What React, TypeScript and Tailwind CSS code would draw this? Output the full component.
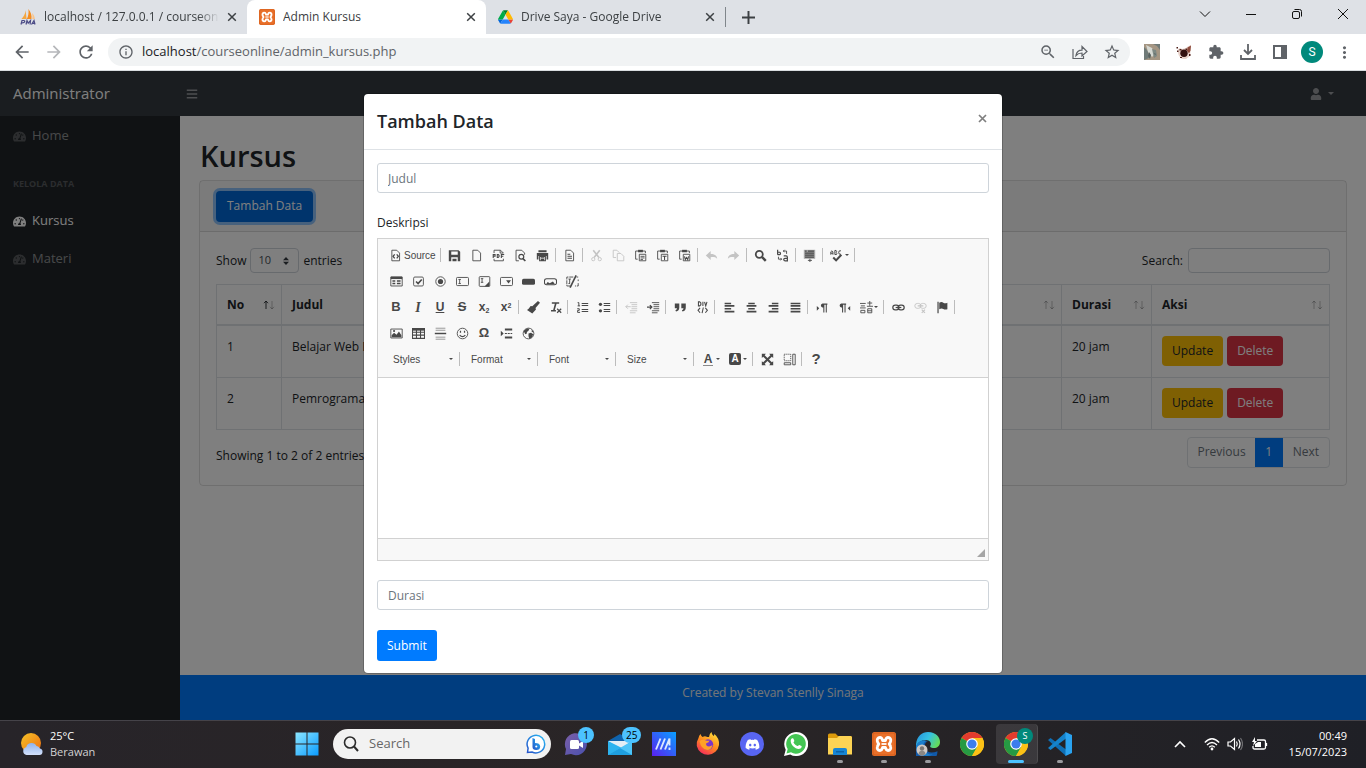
import React from "react";
import { FaBars, FaDiscord, FaTachometerAlt, FaUser } from "react-icons/fa";
import {
  MdArrowBack,
  MdArrowForward,
  MdInfoOutline,
  MdMoreVert,
  MdRefresh,
  MdStarBorder,
  MdZoomOut,
} from "react-icons/md";

/* ---------- Browser chrome ---------- */

function PmaLogo() {
  return (
    <svg viewBox="0 0 16 16" className="size-4 shrink-0" aria-hidden="true">
      <path d="M5.6 1.2 6.600 10H1.4C3.6 8 5.2 5 5.6 1.2Z" fill="#f4a640" />
      <path d="M8.4 0C11 3 12 7 11.4 10H6.8C8.4 7 8.9 3.600 8.400 0Z" fill="#f58c1e" />
      <path d="M12 4c1.800 1.600 2.800 4 2.900 6h-2.600c.4-2 .3-4-.3-6Z" fill="#f9c48a" />
      <path d="M1 15.500 2 11.500h1.800q1.200.2.9 1.300-.4 1.100-2.600 1M6 15.500l1-4 1.200 2.700 2.300-2.700-.4 4M11.500 15.500l2.500-4 1 4M12.400 14.300h2.300" fill="none" stroke="#4b4b86" strokeWidth="1.200" />
    </svg>
  );
}

function XamppLogo({ className }: { className: string }) {
  return (
    <svg viewBox="0 0 24 24" className={className} aria-hidden="true">
      <rect width="24" height="24" rx="2.500" fill="#e9702a" />
      <rect x="1" y="1" width="22" height="22" rx="2" fill="none" stroke="#d65f1c" strokeWidth="1" />
      <path
        d="M8 5.500C5.500 5.500 5 7.500 5.300 9c.2 1.200.8 2.200 1.500 3-.7.8-1.300 1.800-1.500 3-.3 1.500.2 3.500 2.700 3.500 2 0 2.200-1.700 2.600-3h2.800c.4 1.300.6 3 2.600 3 2.500 0 3-2 2.700-3.500-.2-1.200-.8-2.200-1.500-3 .7-.8 1.300-1.800 1.500-3 .3-1.500-.2-3.500-2.700-3.500-2 0-2.200 1.700-2.600 3h-2.800C10.200 7.200 10 5.500 8 5.500Z"
        fill="none"
        stroke="#fff"
        strokeWidth="2.800"
        strokeLinejoin="round"
      />
      <path d="M9.500 12h5" stroke="#fff" strokeWidth="1.800" />
    </svg>
  );
}

function DriveLogo() {
  return (
    <svg viewBox="0 0 87.300 78" className="h-[14px] w-[15px] shrink-0" aria-hidden="true">
      <path d="m6.600 66.850 3.850 6.650c.8 1.400 1.950 2.500 3.300 3.300l13.750-23.800h-27.500c0 1.550.4 3.100 1.200 4.500z" fill="#0066da" />
      <path d="m43.650 25-13.750-23.800c-1.350.8-2.500 1.900-3.300 3.300l-25.400 44a9.060 9.060 0 0 0-1.200 4.500h27.500z" fill="#00ac47" />
      <path d="m73.550 76.800c1.350-.8 2.500-1.900 3.300-3.300l1.600-2.750 7.650-13.250c.8-1.400 1.200-2.950 1.200-4.500h-27.502l5.852 11.500z" fill="#ea4335" />
      <path d="m43.650 25 13.750-23.800c-1.350-.8-2.900-1.200-4.500-1.200h-18.500c-1.600 0-3.150.45-4.500 1.200z" fill="#00832d" />
      <path d="m59.800 53h-32.300l-13.750 23.800c1.350.8 2.900 1.200 4.500 1.200h50.800c1.600 0 3.150-.45 4.500-1.200z" fill="#2684fc" />
      <path d="m73.400 26.500-12.700-22c-.8-1.400-1.950-2.500-3.300-3.300l-13.750 23.800 16.150 28h27.450c0-1.550-.4-3.100-1.200-4.500z" fill="#ffba00" />
    </svg>
  );
}

function Tab({ icon, title, active = false }: { icon: React.ReactNode; title: string; active?: boolean }) {
  return (
    <div className={`flex h-full w-[239px] items-center pr-[10px] pl-3 ${active ? "rounded-t-lg bg-white" : ""}`}>
      {icon}
      <span
        className={`ml-2 flex-1 overflow-hidden text-[12px] whitespace-nowrap text-[#3c4043] ${
          active ? "" : "[mask-image:linear-gradient(to_right,black_88%,transparent)]"
        }`}
      >
        {title}
      </span>
      <button type="button" aria-label={`Close ${title}`} className="ml-2 flex size-[10px] shrink-0 items-center">
        <svg viewBox="0 0 10 10" className="size-[10px]">
          <path d="M1.200 1.200l7.600 7.600M8.800 1.200L1.200 8.800" stroke="#3c4043" strokeWidth="1.500" />
        </svg>
      </button>
    </div>
  );
}

function WindowButton({ label, children }: { label: string; children: React.ReactNode }) {
  return (
    <button type="button" aria-label={label} className="flex h-7 w-[46px] items-center justify-center">
      <svg viewBox="0 0 12 12" className="size-3" fill="none" stroke="#111" strokeWidth="1">
        {children}
      </svg>
    </button>
  );
}

function ToolButton({ label, children }: { label: string; children: React.ReactNode }) {
  return (
    <button type="button" aria-label={label} className="flex h-7 w-8 shrink-0 items-center justify-center text-[#5f6368]">
      {children}
    </button>
  );
}

function BrowserChrome() {
  return (
    <header className="shrink-0 border-b border-[#d8dcdf] bg-white">
      <div className="flex h-[34px] items-center bg-[#dee1e6] pl-2">
        <Tab icon={<PmaLogo />} title="localhost / 127.0.0.1 / courseonlin" />
        <Tab icon={<XamppLogo className="size-4 shrink-0" />} title="Admin Kursus" active />
        <Tab icon={<DriveLogo />} title="Drive Saya - Google Drive" />
        <div className="h-5 w-px bg-[#80868b]" />
        <button type="button" aria-label="New tab" className="ml-4">
          <svg viewBox="0 0 12 12" className="size-[13px]">
            <path d="M6 0v12M0 6h12" stroke="#3c4043" strokeWidth="1.800" />
          </svg>
        </button>
        <div className="ml-auto flex h-full items-start">
          <WindowButton label="Search tabs">
            <path d="M1 3.500l5 5 5-5" />
          </WindowButton>
          <WindowButton label="Minimize">
            <path d="M1 6.500h10" />
          </WindowButton>
          <WindowButton label="Restore">
            <rect x="1.500" y="3.500" width="7" height="7" rx="1.500" />
            <path d="M3.500 1.500h5q2 0 2 2v5" />
          </WindowButton>
          <WindowButton label="Close">
            <path d="M1 1l10 10M11 1L1 11" />
          </WindowButton>
        </div>
      </div>
      <div className="flex h-9 items-center pr-[6px] pl-[6px]">
        <ToolButton label="Back"><MdArrowBack size={20} /></ToolButton>
        <ToolButton label="Forward"><MdArrowForward size={20} className="text-[#b5b7ba]" /></ToolButton>
        <ToolButton label="Reload"><MdRefresh size={20} /></ToolButton>
        <div className="mx-[6px] flex h-7 flex-1 items-center rounded-full bg-[#f1f3f4] pr-[2px] pl-[10px]">
          <MdInfoOutline size={16} className="shrink-0 text-[#5f6368]" />
          <span className="ml-2 text-[13px] text-[#5f6368]">
            <span className="text-[#202124]">localhost</span>/courseonline/admin_kursus.php
          </span>
          <div className="ml-auto flex">
            <ToolButton label="Zoom"><MdZoomOut size={18} /></ToolButton>
            <ToolButton label="Share">
              <svg viewBox="0 0 16 16" className="size-4" fill="none" stroke="currentColor" strokeWidth="1.200">
                <path d="M1 5v9.500h10.500V12M4 11.500c.5-3.500 2.500-5.300 6-5.300V2.500l5 5-5 4.500V9C7.500 9 5.500 9.800 4 11.500Z" />
              </svg>
            </ToolButton>
            <ToolButton label="Bookmark"><MdStarBorder size={18} /></ToolButton>
          </div>
        </div>
        <ToolButton label="Photo extension">
          <svg viewBox="0 0 16 16" className="size-4">
            <rect width="16" height="16" fill="#a59683" />
            <path d="M0 3l4 4 1 7-5 2ZM9 0h7v6l-3-4Z" fill="#6f7a78" />
            <path d="M2 1l6 3 3 6-3 3-4-5Z" fill="#d5d8d2" />
            <path d="M8 5l4 1 1 6-3 2Z" fill="#7d8883" />
            <path d="M5 8l2 3-1 4-2-3ZM10 9l2 1-1 1Z" fill="#566160" />
          </svg>
        </ToolButton>
        <ToolButton label="Cat extension">
          <svg viewBox="0 0 16 16" className="size-4">
            <path d="M2 5l2-1 2 1 4-1 1-1 4-2-.5 6-.5 5-4 3H6l-3-3-1-3Z" fill="#e9d3cb" />
            <path d="M11.500 3.500l3.500-2-.5 5-1.500 3-2-3Z" fill="#8d4a3c" />
            <circle cx="8" cy="9.300" r="3.700" fill="#33100f" />
            <path d="M.5 3h1.500v1.500H.500ZM1 6.500h1.500V8H1ZM3.500 5h2v1.500h-2ZM9.500 4.500H11V6H9.500ZM13 10h1.500v2H13ZM4 13h2v1H4Z" fill="#4a1c17" />
          </svg>
        </ToolButton>
        <ToolButton label="Extensions">
          <svg viewBox="0 0 24 24" className="size-4" fill="currentColor">
            <path d="M20.500 11H19V7c0-1.100-.9-2-2-2h-4V3.500C13 2.120 11.880 1 10.500 1S8 2.120 8 3.500V5H4c-1.100 0-1.990.9-1.990 2v3.800H3.500c1.490 0 2.700 1.210 2.700 2.700s-1.210 2.700-2.700 2.700H2V20c0 1.100.9 2 2 2h3.800v-1.500c0-1.490 1.210-2.700 2.700-2.700s2.700 1.210 2.700 2.700V22H17c1.100 0 2-.9 2-2v-4h1.500c1.380 0 2.500-1.120 2.500-2.500S21.880 11 20.500 11z" />
          </svg>
        </ToolButton>
        <ToolButton label="Downloads">
          <svg viewBox="0 0 16 16" className="size-4" fill="none" stroke="currentColor" strokeWidth="1.800">
            <path d="M8 0v9.500M4 6l4 4 4-4M1 11v4h14v-4" />
          </svg>
        </ToolButton>
        <ToolButton label="Side panel">
          <svg viewBox="0 0 14 14" className="size-[14px]">
            <path d="M0 0h14v14H0ZM2 2v10h6V2Z" fill="currentColor" fillRule="evenodd" />
          </svg>
        </ToolButton>
        <ToolButton label="Profile">
          <span className="flex size-[22px] items-center justify-center rounded-full bg-[#00897b] font-[Roboto] text-[12px] text-white">S</span>
        </ToolButton>
        <ToolButton label="Menu"><MdMoreVert size={19} /></ToolButton>
      </div>
    </header>
  );
}

/* ---------- Admin page ---------- */

function SideLink({ label, active = false }: { label: string; active?: boolean }) {
  return (
    <a href="#" className={`flex h-[38px] items-center px-[13px] text-[13px] ${active ? "text-white" : "text-white/50"}`}>
      <FaTachometerAlt size={13} className={`mr-[6px] ${active ? "text-white" : "text-white/25"}`} />
      {label}
    </a>
  );
}

function SortArrows({ ascending = false }: { ascending?: boolean }) {
  return (
    <svg viewBox="0 0 12 10" className="h-[10px] w-3 shrink-0" fill="none" stroke="#212529" aria-hidden="true">
      <path d="M3 9V1M1 3.200l2-2.200 2 2.200" opacity={ascending ? 0.9 : 0.3} />
      <path d="M9 1v8M7 6.800L9 9l2-2.200" opacity=".3" />
    </svg>
  );
}

function HeadCell({ label, ascending }: { label: string; ascending?: boolean }) {
  return (
    <th className="border border-b-2 border-[#dee2e6] py-0 pr-[6px] pl-[10px] text-left font-bold">
      <div className="flex h-[39px] items-center justify-between">
        {label}
        <SortArrows ascending={ascending} />
      </div>
    </th>
  );
}

const courses = [
  { no: 1, title: "Belajar Web Dasar", duration: "20 jam" },
  { no: 2, title: "Pemrograman", duration: "20 jam" },
];

function AdminPage() {
  return (
    <div className="flex h-full flex-col text-[12px] text-[#212529]">
      <nav className="flex h-[45px] shrink-0 items-center bg-[#343a40]">
        <a href="#" className="w-[180px] pl-[13px] text-[15px] text-white">Administrator</a>
        <button type="button" aria-label="Toggle sidebar" className="ml-[6px] text-white/50"><FaBars size={12} /></button>
        <button type="button" aria-label="Account" className="mr-8 ml-auto flex items-center gap-[6px] text-white/50">
          <FaUser size={12} />
          <svg viewBox="0 0 6 3" className="h-[3px] w-[6px]"><path d="M0 0h6L3 3Z" fill="currentColor" /></svg>
        </button>
      </nav>
      <div className="flex min-h-0 flex-1">
        <aside className="w-[180px] shrink-0 bg-[#212529] pt-px">
          <SideLink label="Home" />
          <h2 className="mt-[19px] mb-2 flex h-5 items-center px-[13px] text-[9px] leading-5 font-bold text-white/25">KELOLA DATA</h2>
          <SideLink label="Kursus" active />
          <SideLink label="Materi" />
        </aside>
        <div className="flex min-w-0 flex-1 flex-col bg-white">
          <main className="flex-1 px-5 pt-[22px]">
            <h1 className="h-[42px] text-[29px] leading-9 font-semibold">Kursus</h1>
            <section className="-mx-px rounded border border-black/[.125]">
              <div className="flex h-[51px] items-center border-b border-black/[.125] bg-black/[.03] px-4">
                <button type="button" className="h-[31px] rounded bg-[#0069d9] px-[11px] text-white ring-[3px] ring-[#268fff]/50">
                  Tambah Data
                </button>
              </div>
              <div className="px-4 pt-4 pb-[17px]">
                <div className="flex items-center justify-between">
                  <label className="flex items-center gap-1">
                    Show
                    <span className="relative flex items-center">
                      <select className="h-[25px] w-[49px] appearance-none rounded border border-[#ced4da] bg-white pl-[7px] text-[11px] text-[#495057]">
                        <option>10</option>
                      </select>
                      <svg viewBox="0 0 6 8" className="pointer-events-none absolute right-[10px] h-2 w-[6px]">
                        <path d="M0 3.200h6L3 0ZM0 4.800h6L3 8Z" fill="#343a40" />
                      </svg>
                    </span>
                    entries
                  </label>
                  <label className="flex items-center gap-[5px]">
                    Search:
                    <input type="search" className="h-[25px] w-[142px] rounded border border-[#ced4da] bg-white px-2" />
                  </label>
                </div>
                <table className="mt-[11px] w-full table-fixed border-collapse">
                  <colgroup>
                    <col className="w-[65px]" />
                    <col className="w-[220px]" />
                    <col />
                    <col className="w-[90px]" />
                    <col className="w-[178px]" />
                  </colgroup>
                  <thead>
                    <tr>
                      <HeadCell label="No" ascending />
                      <HeadCell label="Judul" />
                      <HeadCell label="Deskripsi" />
                      <HeadCell label="Durasi" />
                      <HeadCell label="Aksi" />
                    </tr>
                  </thead>
                  <tbody>
                    {courses.map((c) => (
                      <tr key={c.no} className="h-[52px] align-top [&>td]:border [&>td]:border-[#dee2e6] [&>td]:px-[10px] [&>td]:pt-[10px] [&>td]:leading-[22px]">
                        <td>{c.no}</td>
                        <td>{c.title}</td>
                        <td></td>
                        <td>{c.duration}</td>
                        <td>
                          <div className="flex gap-1">
                            <button type="button" className="h-[30px] rounded bg-[#ffc107] px-[10px]">Update</button>
                            <button type="button" className="h-[30px] rounded bg-[#dc3545] px-[10px] text-white">Delete</button>
                          </div>
                        </td>
                      </tr>
                    ))}
                  </tbody>
                </table>
                <div className="mt-[7px] flex items-center justify-between">
                  <p className="pt-2">Showing 1 to 2 of 2 entries</p>
                  <div className="flex h-[31px] overflow-hidden rounded border border-[#dee2e6] text-[#6c757d]">
                    <button type="button" className="px-[9px]">Previous</button>
                    <button type="button" className="-my-px w-7 bg-[#007bff] text-white">1</button>
                    <button type="button" className="px-[10px]">Next</button>
                  </div>
                </div>
              </div>
            </section>
          </main>
          <footer className="h-[45px] bg-[#007bff] pt-2 text-center leading-5 text-[#e9ecef]">Created by Stevan Stenlly Sinaga</footer>
        </div>
      </div>
    </div>
  );
}

/* ---------- Rich text editor ---------- */

const page = <path d="M3.500 1.500h6l3.500 3.500v9.500H3.500Z" />;
const clipboard = (
  <>
    <path d="M5 2.500H2v10h2.500M11 2.500h3V5" />
    <path d="M5 1h6v3H5Z" fill="currentColor" stroke="none" />
    <path d="M6.500 6.500h8v8h-8Z" />
  </>
);

const glyphs: Record<string, React.ReactNode> = {
  Source: <>{page}<path d="M7 6.500L5 9l2 2.500M9.500 6.500l2 2.500-2 2.500" strokeWidth="1.600" /></>,
  Save: <path d="M1 1.500h12l2 2V15H1ZM4 3v4h8V3ZM4 10v5h1.500v-3h5v3H12v-5Z" fill="currentColor" stroke="none" fillRule="evenodd" />,
  "New Page": page,
  "Export to PDF": (
    <>
      <path d="M2.500 5V1.500h8L14 5M2.500 12v2.500H14V12M10 1.500V5h4" />
      <path d="M1.500 11V6.800h2.300v2H1.500M6.500 6.800v3.600h1.200l1-1V7.800l-1-1ZM11.500 11V6.800H15M11.500 9h2.500" strokeWidth="1.300" />
    </>
  ),
  Preview: <><path d="M6 14.500H2.500v-13h7L13 5v2" /><circle cx="9" cy="9.500" r="3" strokeWidth="1.500" /><path d="M11 11.800l3 3" strokeWidth="2" /></>,
  Print: <><path d="M3 1.500h10v2.500H3ZM1 5h14v8h-2V8.500H3V13H1Z" fill="currentColor" stroke="none" /><path d="M4.500 9h7v5.500h-7ZM6 11h4M6 13h4" strokeWidth="1.400" /></>,
  Templates: <>{page}<path d="M5.500 6.500H9M5.500 9h5.500M5.500 11.500h5.500" strokeWidth="1.300" /></>,
  Cut: <><path d="M4 1.500l7 9M12 1.500l-7 9" strokeWidth="2" /><circle cx="4" cy="12.500" r="2" /><circle cx="12" cy="12.500" r="2" /></>,
  Copy: <><path d="M5 10.500H1.500v-9H6l3 3" /><path d="M6.500 5.500H11l3.500 3.500v5.500h-8Z" /></>,
  Paste: <>{clipboard}<path d="M8 9h5M8 11h5M8 13h3" /></>,
  "Paste text": <>{clipboard}<path d="M8 9h5M10.500 9v4.500" strokeWidth="1.300" /></>,
  "Paste from Word": <>{clipboard}<path d="M8 9l1 4 1.500-2.500L12 13l1-4" strokeWidth="1.300" /></>,
  Undo: <path d="M1 8l6-5.500V6c4.500 0 7.500 1.500 8 6-2-2-4-2.300-8-2v3.500Z" fill="currentColor" stroke="none" />,
  Redo: <path d="M15 8L9 2.500V6C4.500 6 1.500 7.500 1 12c2-2 4-2.300 8-2v3.500Z" fill="currentColor" stroke="none" />,
  Find: <><circle cx="6.500" cy="6.500" r="4.300" strokeWidth="2.200" /><path d="M10 10l4.500 4.500" strokeWidth="3" /></>,
  Replace: (
    <>
      <path d="M2 1v6M2 4h2.500q1 .2 1 1.500t-1 1.500H2M9.500 8.500h3q1.500 0 1.500 1.500v4.500h-3q-1.500 0-1.500-1.500t1.500-1.500H14" strokeWidth="1.500" />
      <path d="M13 6V2.500H9M10.500 1L9 2.500 10.500 4M3 9.500v3h4M5.500 11L7 12.500 5.500 14" />
    </>
  ),
  "Select All": <><path d="M1 1h14v11H1Z" fill="#a5a5a5" stroke="none" /><path d="M2.500 2.500h2M6 2.500h7.500M2.500 5h11M2.500 7.500h11M2.500 10h11" strokeWidth="1.500" /><path d="M6 14h5M8.500 12v4" /></>,
  Spell: <><path d="M1 7V3.500Q2.300 1 3.600 3.500V7M1 5.200h2.600M6 1.800v5h2q1-1.300-.3-2.500 1-1.500-.2-2.500ZM13.500 2.200q-2.800-.8-2.800 2.100T13.500 6.500" strokeWidth="1.200" /><path d="M4 10.500l3.500 3.500L14 7" strokeWidth="2.500" /></>,
  Form: <><path d="M1 2.500h14v11H1Z" /><path d="M1 2h14v3H1Z" fill="currentColor" stroke="none" /><path d="M3 7.500h3.500M3 10.500h3.500M8.500 7.500H13M8.500 10.500H13" strokeWidth="1.800" /></>,
  Checkbox: <><rect x="2" y="2.500" width="12" height="11" rx="1.500" /><path d="M5 8l2.500 2.500L12 5.500" strokeWidth="2" /></>,
  "Radio Button": <><circle cx="8" cy="8" r="5.800" /><circle cx="8" cy="8" r="3.200" fill="currentColor" stroke="none" /></>,
  "Text Field": <><rect x=".6" y="3" width="14.800" height="10" rx="1.200" /><path d="M3 5.500h3M3 10.500h3M4.500 5.500v5" /></>,
  Textarea: <><rect x="1.500" y="2" width="13" height="12" rx="1" /><path d="M3.500 4.500h3M3.500 9h3M5 4.500V9" /><path d="M14 8v6H8Z" fill="currentColor" stroke="none" /></>,
  "Selection Field": <><rect x=".6" y="3" width="14.800" height="10" rx="1.200" /><path d="M7.500 6.500h6l-3 4Z" fill="currentColor" stroke="none" /></>,
  Button: <rect y="4.500" width="16" height="7.500" rx="2" fill="currentColor" stroke="none" />,
  "Image Button": <><rect x=".6" y="4.500" width="14.800" height="7.500" rx="2.500" strokeWidth="1.300" /><path d="M2.500 11.500l2-3 2.500 1.500 4-2 2.500 3.500Z" fill="currentColor" stroke="none" /></>,
  "Hidden Field": <><path d="M9 2.500H1v11h4M3 5h3M3 10.500h2M4.500 5v5.500M13 2.500h2M15 5.500v2M15 10v3.500h-4" strokeDasharray="5 1" /><path d="M12.500.5L5 15.500" strokeWidth="2" /></>,
  "Remove Format": <><path d="M3.500 2.500h9M8.500 2.500l-2.500 9M2.500 12h6" strokeWidth="2" /><path d="M10 9.500l5 5M15 9.500l-5 5" strokeWidth="1.500" /></>,
  "Copy Formatting": <path d="M13.500 0L16 2l-5.500 6.500.5 2-4.500 5L0 11l2-1.500L4.500 6l2 .5Z" fill="currentColor" stroke="none" />,
  "Numbered List": <><path d="M2 2h1.500v4M2 6h3M1.500 9.500H4v2H2v2.500h3" strokeWidth="1.200" /><path d="M7 3h8M7 5.500h8M7 10.500h8M7 13h8" strokeWidth="1.300" /></>,
  "Bulleted List": <><circle cx="3" cy="4" r="2" fill="currentColor" stroke="none" /><circle cx="3" cy="12" r="2" fill="currentColor" stroke="none" /><path d="M7 3h8M7 5.500h8M7 10.500h8M7 13h8" strokeWidth="1.300" /></>,
  Outdent: <><path d="M6 2h9M8 4.500h7M8 7h7M8 9.500h7M6 12h9M6 14.500h7" /><path d="M7 7H1M3.500 4.500L1 7l2.500 2.500" /></>,
  Indent: <><path d="M6 2h9M8 4.500h7M8 7h7M8 9.500h7M6 12h9M6 14.500h7" /><path d="M0 7.500h6M3.500 5L6 7.500 3.500 10" strokeWidth="1.500" /></>,
  Quote: <path d="M1 3h5.500v5q0 4-4 5l-.8-1.500q2-.9 2-2.500H1ZM9 3h5.500v5q0 4-4 5l-.8-1.500q2-.9 2-2.500H9Z" fill="currentColor" stroke="none" />,
  Div: <path d="M3 1v5h1.500L6 4.500V2.500L4.500 1ZM8.500 1v5M10.500 1l1.500 5 1.500-5M5 8.500l-2.500 3L5 14.500M11.500 8.500l2.500 3-2.500 3M9 8l-1.500 7" strokeWidth="1.300" />,
  "Align Left": <path d="M2 3h8M2 6h12M2 9.500h8M2 13h12" strokeWidth="2" />,
  Center: <path d="M4 3h8M2 6h12M4 9.500h8M2 13h12" strokeWidth="2" />,
  "Align Right": <path d="M6 3h8M2 6h12M6 9.500h8M2 13h12" strokeWidth="2" />,
  Justify: <path d="M2 3h12M2 6h12M2 9.500h12M2 13h12" strokeWidth="2" />,
  "Left to right": <><path d="M1 6v6l3-3Z" fill="currentColor" stroke="none" /><path d="M14 3H8q-2 .5-2 2.500T8 8h1v6h1.300V4.500H12V14h1.300V4.500H14Z" fill="currentColor" stroke="none" /></>,
  "Right to left": <><path d="M15 6v6l-3-3Z" fill="currentColor" stroke="none" /><path d="M10 3H4Q2 3.500 2 5.500T4 8h1v6h1.300V4.500H8V14h1.300V4.500H10Z" fill="currentColor" stroke="none" /></>,
  Language: <path d="M0 3h7M1 6h5M0 8.500h7M1 11.500v3h5v-3ZM9 2.500h6M12 0v6M8.500 6.500H16M9.500 9.500h5v5h-5ZM9.500 12h5" />,
  Link: <><rect x="1" y="5" width="7.500" height="6" rx="3" strokeWidth="1.500" /><rect x="7.500" y="5" width="7.500" height="6" rx="3" strokeWidth="1.500" /><path d="M4.500 8h7" strokeWidth="1.500" /></>,
  Unlink: <><rect x="1" y="3" width="7.500" height="6" rx="3" /><rect x="7.500" y="3" width="7.500" height="6" rx="3" /><path d="M4.500 6h7M9.500 10.500l4 4M13.500 10.500l-4 4" strokeWidth="1.400" /></>,
  Anchor: <><path d="M2.500 1v14" strokeWidth="1.500" /><path d="M4 2q3-1.500 5 0t5 0v8q-3 1-5-.3T4 10Z" fill="currentColor" stroke="none" /></>,
  Image: <><path d="M1 2.500h14v11H1Z" /><path d="M2 12.500V10l3-3 3 2.500 3-4 3 4.500v2.500Z" fill="currentColor" stroke="none" /><circle cx="5" cy="5" r="1.300" fill="currentColor" stroke="none" /></>,
  Table: <><path d="M.6 2h14.800v12H.6ZM5.500 2v12M10.500 2v12M1 10h14M1 6.500h14" strokeWidth="1.300" /><path d="M.5 1.500h15v3H.5Z" fill="currentColor" stroke="none" /></>,
  "Horizontal Line": <><path d="M2 1.500h12M2 4h12M2 12.500h12M2 15h12" opacity=".6" /><path d="M1 8h14" strokeWidth="1.800" /></>,
  Smiley: <><circle cx="8" cy="8" r="6.500" /><path d="M4.500 10q3.500 3.500 7 0M5.500 4.500v2.500M10.500 4.500v2.500" strokeWidth="1.500" /></>,
  "Page Break": <><path d="M1 4.500v7l3.500-3.500Z" fill="currentColor" stroke="none" /><path d="M6 3h9M6 13h9" strokeWidth="2.500" /><path d="M6 8h9" strokeWidth="1.500" strokeDasharray="2.500 1" /></>,
  IFrame: <><circle cx="8" cy="8" r="6.600" /><path d="M2 5q3-4 7-3l-1 2.500-2 1.500v2l-2 1ZM8 8l3-1 3 2-2 4-3 1.500-1-3ZM12 3l2 3-2 .5Z" fill="currentColor" stroke="none" /></>,
  Maximize: <path d="M1 1h5L4.500 2.700 8 6.200l3.500-3.500L10 1h5v5l-1.700-1.500L9.800 8l3.500 3.500L15 10v5h-5l1.500-1.700L8 9.800l-3.500 3.500L6 15H1v-5l1.700 1.500L6.200 8 2.700 4.500 1 6Z" fill="currentColor" stroke="none" />,
  "Show Blocks": <><path d="M1.500 1.500h8v8h-8Z" strokeDasharray="1.500 1" /><path d="M1.500 12h8v2.500h-8ZM12 1.500h3v13h-3Z" /></>,
};

function Glyph({ name }: { name: string }) {
  return (
    <svg viewBox="0 0 16 16" className="size-[13px] shrink-0" fill="none" stroke="currentColor" strokeWidth="1.100" aria-hidden="true">
      {glyphs[name]}
    </svg>
  );
}

const disabledTools = ["Cut", "Copy", "Undo", "Redo", "Outdent", "Unlink"];

function Tool({ name, children }: { name: string; children?: React.ReactNode }) {
  return (
    <button
      type="button"
      aria-label={name}
      disabled={disabledTools.includes(name)}
      className="flex h-[22px] w-[22px] shrink-0 items-center justify-center text-[#484848] disabled:text-[#c4c4c4]"
    >
      {children ?? <Glyph name={name} />}
    </button>
  );
}

function Caret({ className }: { className: string }) {
  return (
    <svg viewBox="0 0 4 2" className={`h-[2px] w-1 shrink-0 ${className}`} aria-hidden="true">
      <path d="M0 0h4L2 2Z" fill="#484848" />
    </svg>
  );
}

function MenuTool({ name, children }: { name: string; children?: React.ReactNode }) {
  return (
    <span className="flex items-center">
      <Tool name={name}>{children}</Tool>
      <Caret className="-ml-[3px] mr-[4px]" />
    </span>
  );
}

function Sep() {
  return <span className="mr-[3px] ml-px h-[14px] w-px shrink-0 bg-[#bcbcbc]" />;
}

function Tools({ names }: { names: string[] }) {
  return (
    <>
      {names.map((n) => (
        <Tool key={n} name={n} />
      ))}
    </>
  );
}

function Combo({ label }: { label: string }) {
  return (
    <button type="button" className="flex h-[22px] w-[73px] items-center justify-between pl-[8px] text-[#484848]">
      {label}
      <Caret className="mr-[5px]" />
    </button>
  );
}

function Editor() {
  return (
    <div className="border border-[#d1d1d1] font-['Liberation_Sans',sans-serif] text-[10px]">
      <div className="border-b border-[#d1d1d1] bg-[#f8f8f8] pt-[3px] pr-1 pb-[5px] pl-[7px] [&>div]:flex [&>div]:h-[26px] [&>div]:items-center">
        <div>
          <button type="button" className="mr-[3px] flex h-[22px] items-center gap-[2px] pl-1 text-[#484848]">
            <Glyph name="Source" />
            Source
          </button>
          <Sep />
          <Tools names={["Save", "New Page", "Export to PDF", "Preview", "Print"]} />
          <Sep />
          <Tools names={["Templates"]} />
          <Sep />
          <Tools names={["Cut", "Copy", "Paste", "Paste text", "Paste from Word"]} />
          <Sep />
          <Tools names={["Undo", "Redo"]} />
          <Sep />
          <Tools names={["Find", "Replace"]} />
          <Sep />
          <Tools names={["Select All"]} />
          <Sep />
          <MenuTool name="Spell" />
          <Sep />
        </div>
        <div>
          <Tools names={["Form", "Checkbox", "Radio Button", "Text Field", "Textarea", "Selection Field", "Button", "Image Button", "Hidden Field"]} />
        </div>
        <div>
          <Tool name="Bold"><b className="text-[13px]">B</b></Tool>
          <Tool name="Italic"><b className="font-['Liberation_Serif',serif] text-[14px] italic">I</b></Tool>
          <Tool name="Underline"><b className="text-[12px] underline">U</b></Tool>
          <Tool name="Strikethrough"><b className="text-[13px] line-through">S</b></Tool>
          <Tool name="Subscript"><b className="text-[12px]">x<sub className="text-[7px]">2</sub></b></Tool>
          <Tool name="Superscript"><b className="text-[12px]">x<sup className="text-[7px]">2</sup></b></Tool>
          <Sep />
          <Tools names={["Copy Formatting", "Remove Format"]} />
          <Sep />
          <Tools names={["Numbered List", "Bulleted List"]} />
          <Sep />
          <Tools names={["Outdent", "Indent"]} />
          <Sep />
          <Tools names={["Quote", "Div"]} />
          <Sep />
          <Tools names={["Align Left", "Center", "Align Right", "Justify"]} />
          <Sep />
          <Tools names={["Left to right", "Right to left"]} />
          <MenuTool name="Language" />
          <Sep />
          <Tools names={["Link", "Unlink", "Anchor"]} />
          <Sep />
        </div>
        <div>
          <Tools names={["Image", "Table", "Horizontal Line", "Smiley"]} />
          <Tool name="Special Character"><b className="text-[13px]">Ω</b></Tool>
          <Tools names={["Page Break", "IFrame"]} />
        </div>
        <div>
          <Combo label="Styles" />
          <Sep />
          <Combo label="Format" />
          <Sep />
          <Combo label="Font" />
          <Sep />
          <Combo label="Size" />
          <Sep />
          <MenuTool name="Text Color"><b className="border-b border-[#8a8a8a] px-px text-[12px] leading-3">A</b></MenuTool>
          <MenuTool name="Background Color"><b className="size-3 rounded-[2px] bg-[#484848] text-center text-[10px] leading-3 text-white">A</b></MenuTool>
          <Sep />
          <Tools names={["Maximize", "Show Blocks"]} />
          <Sep />
          <Tool name="About"><b className="text-[15px]">?</b></Tool>
        </div>
      </div>
      <textarea id="deskripsi" className="block h-[160px] w-full resize-none bg-white p-4 outline-none" />
      <div className="flex h-[22px] items-end justify-end border-t border-[#d1d1d1] bg-[#f8f8f8] p-[3px]">
        <svg viewBox="0 0 8 8" className="size-2" aria-hidden="true"><path d="M8 0v8H0Z" fill="#a5a5a5" /></svg>
      </div>
    </div>
  );
}

function TambahDataModal() {
  const field = "block h-[30px] w-full rounded-[3px] border border-[#ced4da] px-[10px] placeholder:text-[#6c757d]";
  return (
    <div className="absolute inset-0 flex items-start justify-center bg-black/50 pt-[23px]">
      <div role="dialog" aria-labelledby="modal-title" className="w-[638px] max-w-full rounded bg-white text-[12px] text-[#212529] shadow-[0_0_0_1px_rgba(0,0,0,0.2)]">
        <div className="flex h-14 items-center justify-between border-b border-[#dee2e6] px-[13px]">
          <h2 id="modal-title" className="text-[18px] font-semibold">Tambah Data</h2>
          <button type="button" aria-label="Close" className="mr-[2px] mb-[7px]">
            <svg viewBox="0 0 9 9" className="size-[9px]"><path d="M1 1l7 7M8 1L1 8" stroke="#7f7f7f" strokeWidth="1.700" /></svg>
          </button>
        </div>
        <form className="p-[13px] pb-3" onSubmit={(e) => e.preventDefault()}>
          <input type="text" aria-label="Judul" placeholder="Judul" className={field} />
          <label htmlFor="deskripsi" className="mt-5 mb-[5px] block leading-5">Deskripsi</label>
          <Editor />
          <input type="text" aria-label="Durasi" placeholder="Durasi" className={`${field} mt-[19px]`} />
          <button type="submit" className="mt-5 block h-[31px] rounded-[3px] bg-[#007bff] px-[10px] text-white">Submit</button>
        </form>
      </div>
    </div>
  );
}

/* ---------- Taskbar ---------- */

function ChromeLogo() {
  return (
    <svg viewBox="0 0 24 24" className="size-6" aria-hidden="true">
      <circle cx="12" cy="12" r="12" fill="#fbc116" />
      <path d="M12 12L1.600 6A12 12 0 0 1 22.400 6H12Z" fill="#e33b2e" />
      <path d="M12 12L1.600 6A12 12 0 0 0 12 24l5.200-9Z" fill="#269a43" />
      <path d="M12 6h10.400A12 12 0 0 1 12 24l5.200-9Z" fill="#fbc116" />
      <circle cx="12" cy="12" r="5.800" fill="#fff" />
      <circle cx="12" cy="12" r="4.600" fill="#3b7ded" />
    </svg>
  );
}

function AppButton({ label, running, active, badge, children }: {
  label: string;
  running?: boolean;
  active?: boolean;
  badge?: string;
  children: React.ReactNode;
}) {
  return (
    <button type="button" aria-label={label} className="relative flex h-12 w-11 items-center justify-center">
      {active && <span className="absolute inset-y-1 right-0 left-[2px] rounded border-r border-white/10 bg-white/10" />}
      <span className="relative flex">{children}</span>
      {badge && (
        <span className="absolute top-[7px] left-6 flex h-4 min-w-4 items-center justify-center rounded-full bg-[#4cc2ff] px-1 text-[10px] text-black">{badge}</span>
      )}
      {running && <span className="absolute bottom-[5px] h-[3px] w-[6px] rounded-full bg-[#9a9a9e]" />}
      {active && <span className="absolute bottom-[5px] h-[3px] w-4 rounded-full bg-[#4cc2ff]" />}
    </button>
  );
}

function Taskbar() {
  return (
    <footer className="grid h-12 shrink-0 grid-cols-[1fr_auto_1fr] items-center bg-linear-to-r from-[#272429] via-[#2a2526] to-[#1f2026] text-[11px] text-white shadow-[inset_0_1px_0_#454349]">
      <div className="flex items-center pl-5">
        <svg viewBox="0 0 24 24" className="mr-[6px] size-6" aria-hidden="true">
          <defs>
            <linearGradient id="sun" x2="1" y2="1"><stop stopColor="#f5c328" /><stop offset="1" stopColor="#ee6c10" /></linearGradient>
            <linearGradient id="cloud" x2="0" y2="1"><stop stopColor="#8fb2ec" /><stop offset="1" stopColor="#d3e0fa" /></linearGradient>
          </defs>
          <circle cx="11" cy="11" r="10" fill="url(#sun)" />
          <path d="M6.500 23a4 4 0 0 1-.3-7.800A5.500 5.500 0 0 1 16.500 14a4.500 4.500 0 0 1 3.500 2.500 3.300 3.300 0 0 1-.5 6.500Z" fill="url(#cloud)" />
        </svg>
        <div className="leading-4"><p>25°C</p><p className="text-[#d2d1d3]">Berawan</p></div>
      </div>
      <div className="flex items-center pl-px">
        <AppButton label="Start">
          <svg viewBox="0 0 24 24" className="size-6">
            <defs><linearGradient id="win" x2="1" y2="1"><stop stopColor="#8ce6ff" /><stop offset="1" stopColor="#0a9bff" /></linearGradient></defs>
            <path d="M.5.5h11v11H.5ZM12.500.5h11v11h-11ZM.5 12.500h11v11H.5ZM12.500 12.500h11v11h-11Z" fill="url(#win)" />
          </svg>
        </AppButton>
        <label className="mr-[3px] ml-1 flex h-[30px] w-[218px] items-center rounded-full bg-[#f2f2f2] pr-[5px] pl-[10px]">
          <svg viewBox="0 0 16 16" className="size-4 shrink-0" fill="none" stroke="#2b2b2b" strokeWidth="1.600">
            <circle cx="7" cy="6.500" r="5.500" /><path d="M11 10.500l4 4.500" strokeWidth="2" />
          </svg>
          <input type="text" aria-label="Search" placeholder="Search" className="ml-[10px] w-0 flex-1 bg-transparent text-[13px] text-black outline-none placeholder:text-[#666]" />
          <svg viewBox="0 0 20 20" className="size-5 shrink-0" aria-hidden="true">
            <defs><linearGradient id="bing" x1="1" x2="0" y2="1"><stop stopColor="#26b8f4" /><stop offset="1" stopColor="#2652c9" /></linearGradient></defs>
            <path d="M1.500 18.500l.6-4.300A8.800 8.800 0 1 1 6 18Z" fill="#fff" stroke="url(#bing)" strokeWidth="1.500" />
            <path d="M6.500 4l2.500.9v4.200q5 0 5.200 3.400 0 3.500-4 3.500-3.700 0-3.700-3Z" fill="url(#bing)" />
            <circle cx="10.300" cy="12.500" r="1.100" fill="#fff" />
          </svg>
        </label>
        <AppButton label="Chat" badge="1">
          <svg viewBox="0 0 24 24" className="size-6">
            <defs><linearGradient id="chat" x2="1" y2="1"><stop stopColor="#7b5fa8" /><stop offset="1" stopColor="#4a50ae" /></linearGradient></defs>
            <path d="M1 23l1-6A11 11 0 1 1 7 22Z" fill="url(#chat)" />
            <rect x="6" y="8" width="9" height="9" rx="1.500" fill="#fff" /><path d="M15 11.500l4-2.500v7l-4-2.500Z" fill="#fff" />
          </svg>
        </AppButton>
        <AppButton label="Mail" badge="25">
          <svg viewBox="0 0 24 24" className="size-6">
            <path d="M0 9L12 2l12 7v14H0Z" fill="#0f63ad" />
            <path d="M0 9h24l-12 9Z" fill="#e4eef5" />
            <path d="M0 9l14 7L24 9v14H0Z" fill="#2db3ef" />
            <path d="M0 23L24 9v14Z" fill="#4cc4f8" />
            <path d="M12 16L24 23H0Z" fill="#1f9fe0" />
          </svg>
        </AppButton>
        <AppButton label="MyASUS">
          <svg viewBox="0 0 24 24" className="size-6">
            <defs><linearGradient id="asus" x1="1" x2="0" y2="1"><stop stopColor="#08a0ff" /><stop offset="1" stopColor="#5a20f0" /></linearGradient></defs>
            <path d="M0 0h24v24H0Z" fill="url(#asus)" />
            <path d="M4 17.500l4.500-11M8.500 17.500l4.500-11M13 17.500l4.500-11v7M17.500 15.500v2.500" fill="none" stroke="#dce8ff" strokeWidth="1.900" />
          </svg>
        </AppButton>
        <AppButton label="Firefox">
          <svg viewBox="0 0 24 24" className="size-6">
            <defs><linearGradient id="fox" x1=".8" x2=".2" y2="1"><stop stopColor="#ffe13a" /><stop offset=".5" stopColor="#ff8a1e" /><stop offset="1" stopColor="#f5265f" /></linearGradient></defs>
            <path d="M2.500 6q.5-2.500 2-4 .5 2 2 3Q8.500 4 10 4.500q1 .5 3 .5Q13 2 15.500 0 15.500 2 17.500 4q1-.5.8-2Q23.500 6 23 13A11.300 11.300 0 0 1 .8 14Q.3 9.500 2.500 6Z" fill="url(#fox)" />
            <circle cx="12" cy="12.500" r="5.200" fill="#7b35c9" />
            <path d="M3.500 9Q7 7 10 8.500q2 .5 3.500 0l-1 1.700-2.500 1.300q0 3 3 3 2-.2 3.500-1.500Q15.500 18 11 18 5 17 3.500 9Z" fill="#ffa126" />
          </svg>
        </AppButton>
        <AppButton label="Discord">
          <span className="flex size-6 items-center justify-center rounded-full bg-[#5865f2]"><FaDiscord size={15} /></span>
        </AppButton>
        <AppButton label="WhatsApp">
          <svg viewBox="0 0 24 24" className="size-6">
            <path d="M0 24l1.700-6.200A12 12 0 1 1 6.200 22.400Z" fill="#fff" />
            <path d="M2.500 21.500l1.200-4.400A9.800 9.800 0 1 1 7 20.300Z" fill="#43c553" />
            <path d="M8.200 6.300c.6-.3 1.100-.1 1.300.4l.8 2c.2.500-.9 1.300-.8 1.700 1 1.900 2.400 3 4.100 3.700.5.100 1.200-1.300 1.700-1.100l2.200 1c.5.300-.1 2-1 2.500-3.800 1.900-10.200-3.200-9.800-8 .1-1 .9-1.900 1.500-2.200Z" fill="#fff" />
          </svg>
        </AppButton>
        <AppButton label="File Explorer" running>
          <svg viewBox="0 0 24 24" className="size-6">
            <path d="M0 3q0-1.500 1.500-1.500h6L10 4h12.500Q24 4 24 5.500V10H0Z" fill="#dc9a0b" />
            <path d="M0 6h9l2-2h11.500Q24 4 24 5.500v17H0Z" fill="#fcd354" />
            <path d="M5 23v-5q0-2 2-2h10q2 0 2 2v5Z" fill="#1785d4" /><path d="M8 19h8v1.500H8Z" fill="#0b62a8" />
          </svg>
        </AppButton>
        <AppButton label="XAMPP" running><XamppLogo className="size-6" /></AppButton>
        <AppButton label="Edge" running>
          <svg viewBox="0 0 24 24" className="size-6">
            <defs>
              <linearGradient id="edgeTop" x2="1" y1=".2" y2=".6"><stop stopColor="#2795dc" /><stop offset=".5" stopColor="#35c1e2" /><stop offset="1" stopColor="#66dd55" /></linearGradient>
            </defs>
            <path d="M0 12a12 12 0 1 0 21.500 7.300Q12 23 9 16q-1-5 3-7Z" fill="#1159a8" />
            <path d="M0 12C1 4 6 0 12 0c8 0 12 5.500 12 10 0 4-3 6-6 6-3.500 0-4.500-1.300-3.500-2.500C16 11 13.500 8 10 8 5 8 1 11 0 15Z" fill="url(#edgeTop)" />
            <path d="M0 14C2 9 7 7 11 9c-4 1-5 6-2 10 2 3 6 4 8 3.500C10 26 0 23 0 14Z" fill="#1b7fcc" />
            <circle cx="6" cy="18" r="5.500" fill="#cfc9c4" /><circle cx="6" cy="16.500" r="2.200" fill="#7a7672" /><path d="M2.500 22q.5-3.200 3.500-3.200T9.500 22Q6 25 2.500 22Z" fill="#8b8783" />
          </svg>
        </AppButton>
        <AppButton label="Chrome"><ChromeLogo /></AppButton>
        <AppButton label="Chrome profile S" active>
          <ChromeLogo />
          <span className="absolute -top-1 left-[13px] flex size-4 items-center justify-center rounded-full bg-[#00897b] text-[9px] text-white">S</span>
        </AppButton>
        <AppButton label="Visual Studio Code" running>
          <svg viewBox="0 0 24 24" className="size-6">
            <path d="M0 8l2.500-2L18 17.500V24Z" fill="#0f6fb5" />
            <path d="M0 16l2.500 2L18 6.500V0Z" fill="#1583cb" />
            <path d="M17.500 0L24 3v18l-6.500 3Z" fill="#2aa3f0" />
          </svg>
        </AppButton>
      </div>
      <div className="flex items-center justify-end pr-[19px]">
        <svg viewBox="0 0 12 8" className="mr-[18px] h-2 w-3" fill="none" stroke="#fff" strokeWidth="1.600" aria-label="Hidden icons" role="img"><path d="M1 7l5-5 5 5" /></svg>
        <svg viewBox="0 0 16 14" className="mr-[7px] h-[14px] w-4" fill="none" stroke="#fff" strokeWidth="1.300" aria-label="Wi-Fi" role="img">
          <path d="M.8 5.500q7.200-7.500 14.400 0M3 8q5-5 10 0M5.200 10.300q2.800-2.800 5.600 0" /><circle cx="8" cy="12" r="1.400" fill="#fff" stroke="none" />
        </svg>
        <svg viewBox="0 0 16 14" className="mr-2 h-[14px] w-4" fill="none" stroke="#fff" strokeWidth="1.200" aria-label="Volume" role="img">
          <path d="M1 5h2.500L7.500 1.500v11L3.500 9H1ZM9.500 4.500q1.500 2.500 0 5M11.500 2.500q3 4.500 0 9" /><path d="M13.500 1q4 6 0 12" opacity=".35" />
        </svg>
        <svg viewBox="0 0 17 14" className="mr-[21px] h-[14px] w-[17px]" fill="none" stroke="#fff" strokeWidth="1.300" aria-label="Battery" role="img">
          <path d="M6 3h7q1.500 0 1.500 1.500v6Q14.500 12 13 12H3.500Q2 12 2 10.500V9M15.500 6v3" /><path d="M4 10V7l3-2h3v5Z" fill="#fff" stroke="none" /><path d="M4 0L1 5h2L2 9l4-5H4Z" fill="#fff" stroke="none" />
        </svg>
        <div className="text-right leading-4"><p>00:49</p><p>15/07/2023</p></div>
      </div>
    </footer>
  );
}

export default function App() {
  return (
    <div className="flex h-screen flex-col overflow-hidden font-['Open_Sans','Noto_Sans',sans-serif]">
      <BrowserChrome />
      <div className="relative min-h-0 flex-1">
        <AdminPage />
        <TambahDataModal />
      </div>
      <Taskbar />
    </div>
  );
}
